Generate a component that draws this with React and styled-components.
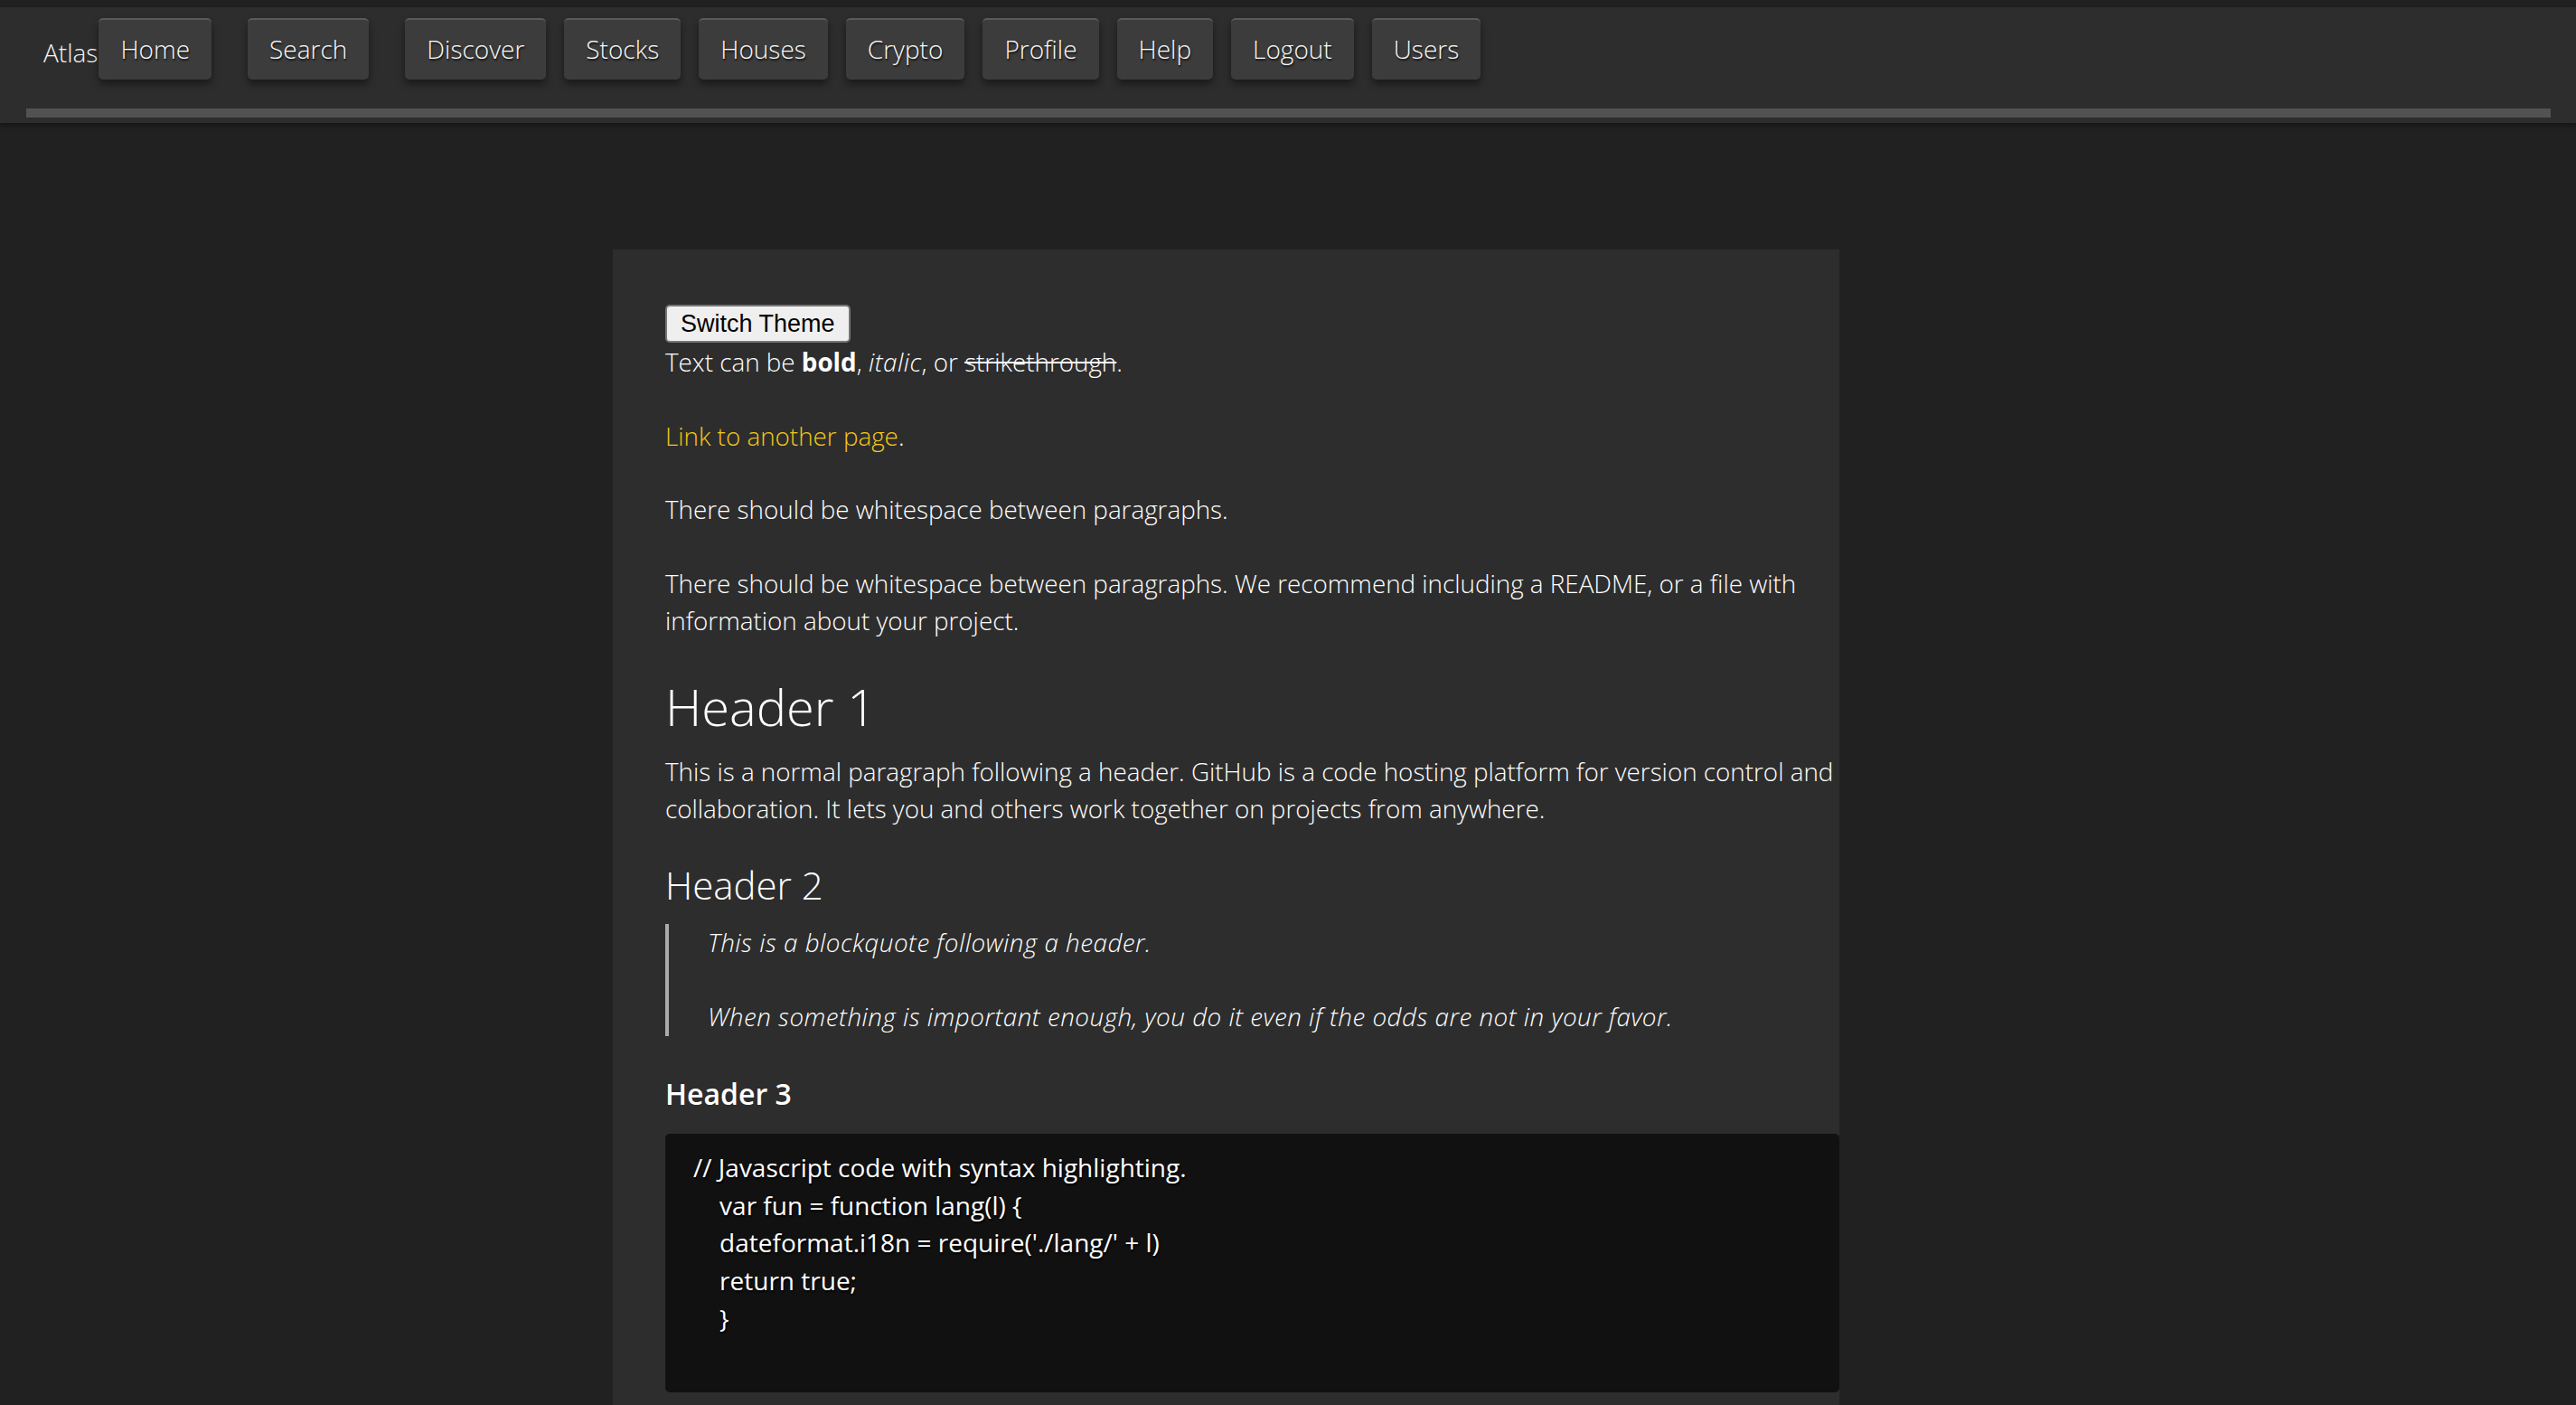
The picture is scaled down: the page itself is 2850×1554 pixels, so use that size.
import React from 'react'
import styled, { createGlobalStyle } from 'styled-components';

const GlobalStyle = createGlobalStyle`
    html, body {
        margin: 0;
        padding: 0;
        background-color: #212121;
        font-family: "Open Sans", "Noto Sans", sans-serif;
        color: #f4f4f4;
    }
`;

// top header
const Header = styled.header`
    margin-top: 8px;
    padding: 12px 28px 6px 29px;
    background-color: #2d2d2d;
    box-shadow: 0 3px 6px rgba(0, 0, 0, 0.35);
    position: relative;
    z-index: 1;
`;

const NavRow = styled.nav`
    display: flex;
    align-items: flex-start;
    height: 68px;
    margin-bottom: 32px;
`;

const Brand = styled.span`
    margin: 19px 1px 0 19px;
    font-size: 28px;
    font-weight: 300;
    color: #f4f4f4;
`;

const NavButton = styled.a`
    display: flex;
    align-items: center;
    box-sizing: border-box;
    height: 68px;
    padding: 0 24px 2px;
    margin-right: ${props => props.$wide ? '40px' : '20px'};
    background-color: #3c3c3c;
    border-top: 2px solid #5a5a5a;
    border-radius: 5px;
    box-shadow: 0 5px 9px rgba(0, 0, 0, 0.45);
    font-size: 28px;
    font-weight: 300;
    color: #f8f8f8;
    text-shadow: 1px 2px 2px rgba(0, 0, 0, 0.7);
    cursor: pointer;
`;

const Bar = styled.div`
    height: 10px;
    background-color: #525252;
`;

// content card
const Card = styled.main`
    margin: 140px 0 0 678px;
    width: 1357px;
    box-sizing: border-box;
    padding: 61px 0 60px 58px;
    background-color: #2d2d2d;
    font-size: 27.8px;
    font-weight: 300;
    line-height: 41.5px;
    color: #ffffff;

    b {
        font-weight: 700;
    }

    i {
        font-weight: 300;
        letter-spacing: 0.5px;
    }
`;

const ThemeButton = styled.button`
    display: block;
    box-sizing: border-box;
    height: 42px;
    padding: 0 15px;
    margin: 0 0 1px;
    background-color: #efefef;
    border: 2px solid #767676;
    border-radius: 5px;
    font-family: "Liberation Sans", Arial, sans-serif;
    font-size: 27px;
    color: #000;
`;

const P = styled.p`
    margin: ${props => props.$top ?? 40}px 0 0;
`;

const Link = styled.a`
    color: #f5c816;
    text-decoration: none;
`;

const Heading = styled.h1`
    margin: ${props => props.$top}px 0 0;
    font-size: ${props => props.$size}px;
    font-weight: ${props => props.$weight || 300};
    line-height: 1.2;
`;

const Quote = styled.blockquote`
    margin: 18px 0 0;
    padding-left: 43px;
    border-left: 4px solid #ababab;
    font-style: italic;
    font-weight: 300;
    letter-spacing: 0.5px;
    color: #ffffff;
`;

const Code = styled.pre`
    margin: 25px 0 0;
    padding: 17px 31px 60px;
    background-color: #111111;
    border-radius: 5px;
    font-family: "Open Sans", "Noto Sans", sans-serif;
    font-size: 28px;
    font-weight: 400;
    line-height: 41.75px;
    color: #fff;
    text-shadow: 1px 2px 2px rgba(0, 0, 0, 0.9);
    white-space: pre;
`;

const links = [
    { label: 'Home', wide: true },
    { label: 'Search', wide: true },
    { label: 'Discover' },
    { label: 'Stocks' },
    { label: 'Houses' },
    { label: 'Crypto' },
    { label: 'Profile' },
    { label: 'Help' },
    { label: 'Logout' },
    { label: 'Users' },
];

const code = `// Javascript code with syntax highlighting.
    var fun = function lang(l) {
    dateformat.i18n = require('./lang/' + l)
    return true;
    }`;

const App = () => {
    return (
        <>
            <GlobalStyle />
            <Header>
                <NavRow>
                    <Brand>Atlas</Brand>
                    {links.map(l => (
                        <NavButton key={l.label} $wide={l.wide}>{l.label}</NavButton>
                    ))}
                </NavRow>
                <Bar />
            </Header>
            <Card>
                <ThemeButton>Switch Theme</ThemeButton>
                <P $top={0}>
                    Text can be <b>bold</b>, <i>italic</i>, or <s>strikethrough</s>.
                </P>
                <P><Link>Link to another page</Link>.</P>
                <P>There should be whitespace between paragraphs.</P>
                <P>There should be whitespace between paragraphs. We recommend including a README, or a file with information about your project.</P>
                <Heading $size={56} $top={40}>Header 1</Heading>
                <P $top={18}>This is a normal paragraph following a header. GitHub is a code hosting platform for version control and collaboration. It lets you and others work together on projects from anywhere.</P>
                <Heading as="h2" $size={42} $top={38}>Header 2</Heading>
                <Quote>
                    <P $top={0}>This is a blockquote following a header.</P>
                    <P $top={40.5}>When something is important enough, you do it even if the odds are not in your favor.</P>
                </Quote>
                <Heading as="h3" $size={32} $weight={600} $top={45}>Header 3</Heading>
                <Code>{code}</Code>
            </Card>
        </>
    )
}

export default App;
